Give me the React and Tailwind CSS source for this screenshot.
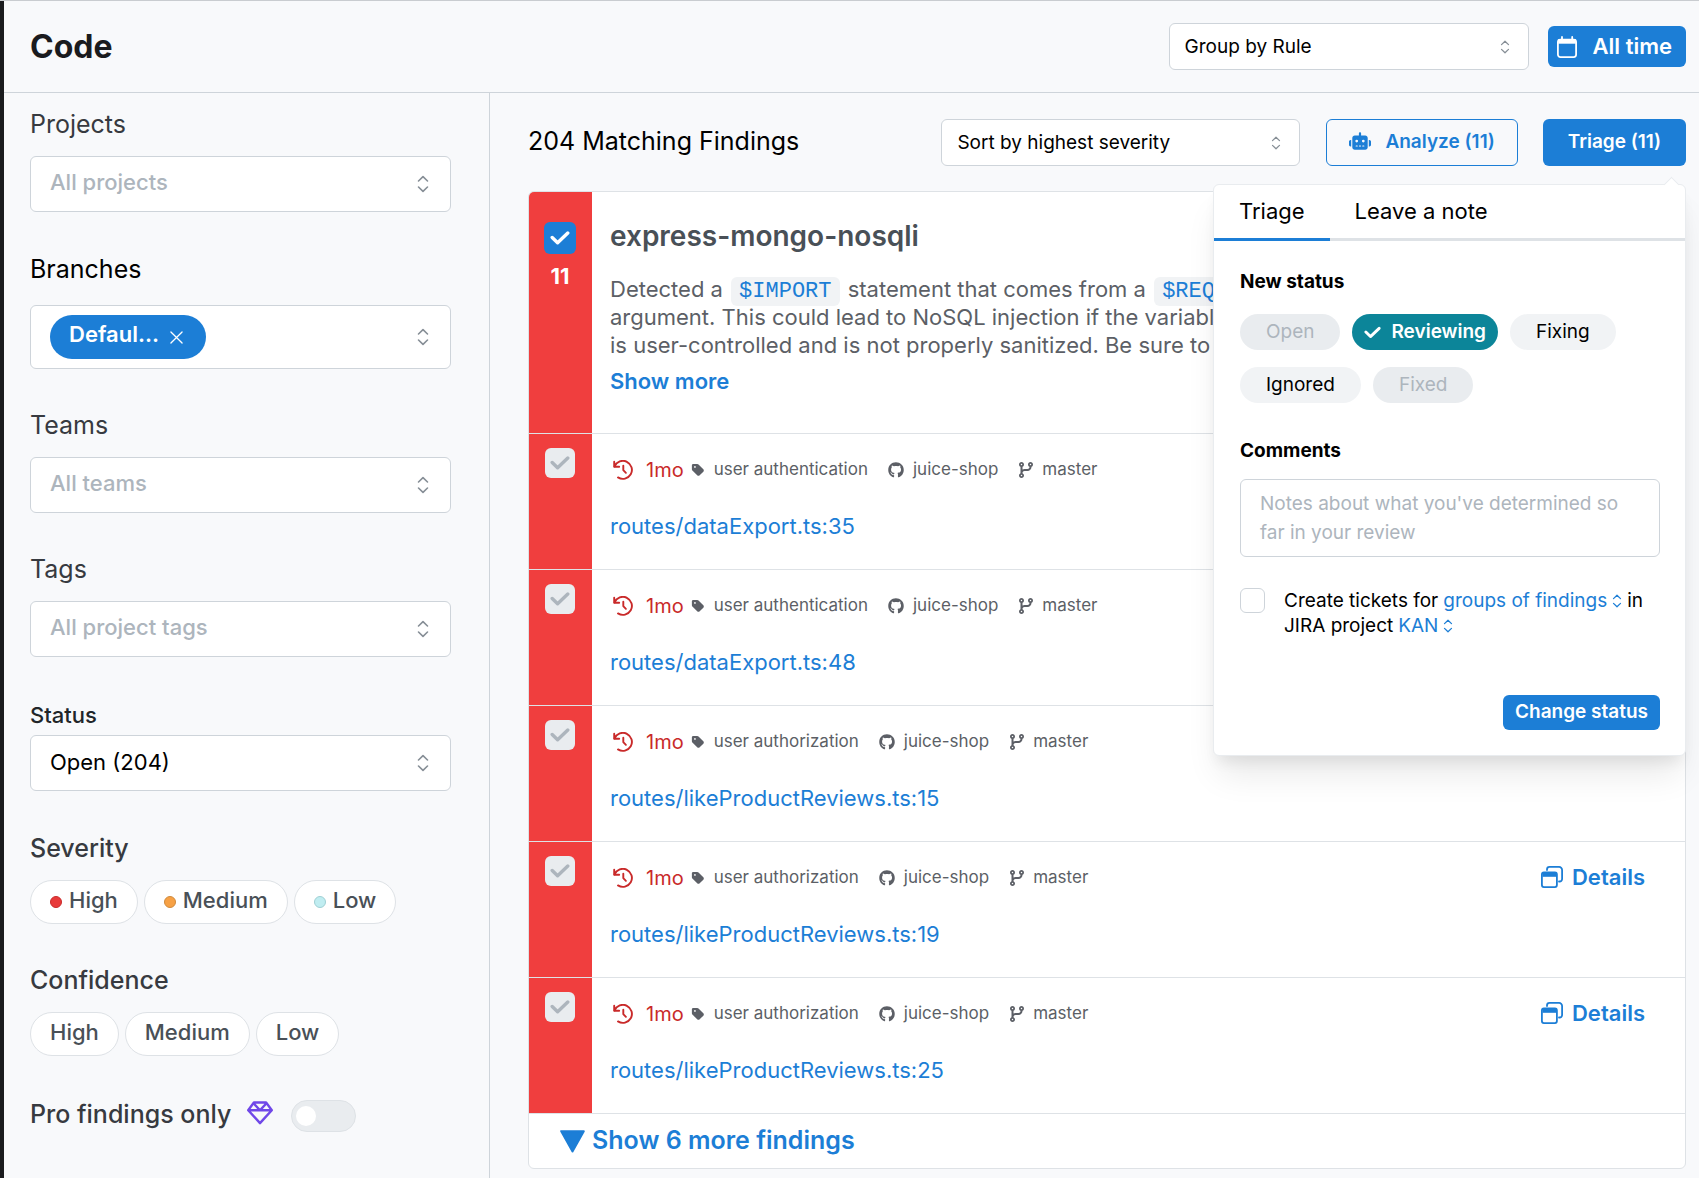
import { FaRobot, FaTag, FaCodeBranch, FaRegGem, FaGithub } from "react-icons/fa6";

const findings = [
  { path: "routes/dataExport.ts:35", tag: "user authentication" },
  { path: "routes/dataExport.ts:48", tag: "user authentication" },
  { path: "routes/likeProductReviews.ts:15", tag: "user authorization" },
  { path: "routes/likeProductReviews.ts:19", tag: "user authorization" },
  { path: "routes/likeProductReviews.ts:25", tag: "user authorization" },
];

function Chevrons({ className }) {
  return (
    <svg viewBox="0 0 12 18" fill="none" stroke="currentColor" strokeWidth="1.6" strokeLinecap="round" strokeLinejoin="round" className={className} aria-hidden="true">
      <path d="M1.5 6 6 1.6 10.5 6M1.5 12 6 16.4 10.5 12" />
    </svg>
  );
}

function CheckIcon({ className }) {
  return (
    <svg viewBox="0 0 20 14" fill="none" stroke="currentColor" strokeWidth="3.4" strokeLinecap="round" strokeLinejoin="round" className={className} aria-hidden="true">
      <path d="M2.2 6.5 7.6 11.8 17.8 2.1" />
    </svg>
  );
}

function HistoryIcon() {
  return (
    <svg viewBox="0 0 20 20" fill="none" stroke="currentColor" strokeWidth="1.9" strokeLinecap="round" strokeLinejoin="round" className="h-5 w-5" aria-hidden="true">
      <path d="M1.2 1.8v5h5" />
      <path d="M1.6 6.4A9 9 0 1 1 5 17.4" />
      <path d="M10.3 5.7V10.2l2.6 2.6" />
    </svg>
  );
}

function CalendarIcon() {
  return (
    <svg viewBox="0 0 20 22" fill="none" stroke="currentColor" strokeWidth="1.8" className="h-[22px] w-5" aria-hidden="true">
      <rect x="0.9" y="3.6" width="18.2" height="17.5" rx="2.5" />
      <path d="M1.2 5.4h17.6" strokeWidth="4.6" />
      <path d="M5 1v3M15.2 1v3" strokeLinecap="round" />
    </svg>
  );
}

function WindowsIcon() {
  return (
    <svg viewBox="0 0 22 22" fill="none" stroke="currentColor" strokeWidth="1.8" className="h-[22px] w-[22px]" aria-hidden="true">
      <rect x="0.9" y="6.4" width="15" height="14.7" rx="2" />
      <path d="M1.5 8.4h14" strokeWidth="4.8" />
      <path d="M6 4v-.6A2.5 2.5 0 0 1 8.5.9h9.6A3 3 0 0 1 21.1 3.9v9.1a2.5 2.5 0 0 1-2.5 2.5h-.6" strokeLinecap="round" />
    </svg>
  );
}

function Dropdown({ id, label, value, className }) {
  return (
    <div className={className}>
      <select
        id={id}
        aria-label={label}
        className="h-[47px] w-full appearance-none rounded-md border border-[#ced4da] bg-white pt-[2px] pl-[15px] text-[19px] text-black"
      >
        <option>{value}</option>
      </select>
      <Chevrons className="pointer-events-none absolute top-1/2 right-[19px] h-[14px] w-[10px] -translate-y-1/2 text-[#868e96]" />
    </div>
  );
}

const sideBox = "flex items-center rounded-md border border-[#ced4da] bg-white pr-[21px] pl-[19px]";
const sideLabel = "block text-[25px] leading-8 font-medium text-[#373a40]";

function FilterInput({ id, label, placeholder }) {
  return (
    <div>
      <label htmlFor={id} className="block text-[25px] leading-8 text-[#373a40]">{label}</label>
      <div className={`mt-4 h-14 ${sideBox}`}>
        <input id={id} placeholder={placeholder} className="min-w-0 flex-1 pb-1 text-[22px] font-medium outline-none placeholder:text-[#adb5bd]" />
        <Chevrons className="h-[18px] w-3 text-[#868e96]" />
      </div>
    </div>
  );
}

function Chip({ children, dot }) {
  return (
    <button className="flex h-11 items-center gap-[7px] rounded-full border border-[#dee2e6] bg-white px-[19px] pb-1 text-[22px] font-medium text-[#495057]">
      {dot && <span className={`mt-1 h-3 w-3 rounded-full border ${dot}`} />}
      {children}
    </button>
  );
}

function Sidebar() {
  return (
    <aside className="flex w-[486px] shrink-0 flex-col gap-10 border-r border-[#ced4da] pt-[15px] pr-[38px] pb-10 pl-[26px]">
      <FilterInput id="projects" label="Projects" placeholder="All projects" />
      <div className="pt-px">
        <label htmlFor="branches" className="block text-[25px] leading-8 text-black">Branches</label>
        <div className={`mt-5 h-16 ${sideBox}`}>
          <span className="flex h-11 items-center rounded-full bg-[#1c7ed6] pr-[23px] pl-[19px] text-[22px] font-semibold text-white">
            <span className="pb-[5px]">Defaul...</span>
            <button aria-label="Remove branch" className="ml-[11px]">
              <svg viewBox="0 0 14 14" fill="none" stroke="currentColor" strokeWidth="1.4" strokeLinecap="round" className="h-[13px] w-[13px]">
                <path d="M1 1l12 12M13 1 1 13" />
              </svg>
            </button>
          </span>
          <input id="branches" className="min-w-0 flex-1 outline-none" />
          <Chevrons className="h-[18px] w-3 text-[#868e96]" />
        </div>
      </div>
      <FilterInput id="teams" label="Teams" placeholder="All teams" />
      <FilterInput id="tags" label="Tags" placeholder="All project tags" />
      <div className="pb-px">
        <label htmlFor="status" className="block pt-[2px] text-[22px] leading-8 font-medium text-[#212529]">Status</label>
        <div className="relative mt-1">
          <select id="status" className="h-14 w-full appearance-none rounded-md border border-[#ced4da] bg-white pb-[2px] pl-[19px] text-[22px] text-black">
            <option>Open (204)</option>
          </select>
          <Chevrons className="pointer-events-none absolute top-[19px] right-[22px] h-[18px] w-3 text-[#868e96]" />
        </div>
      </div>
      <div>
        <h3 className={sideLabel}>Severity</h3>
        <div className="mt-4 flex gap-[6px]">
          <Chip dot="border-[#c92a2a] bg-[#e83a3a]">High</Chip>
          <Chip dot="border-[#d08a3c] bg-[#f7a145]">Medium</Chip>
          <Chip dot="border-[#9fd0d4] bg-[#c0edf1]">Low</Chip>
        </div>
      </div>
      <div>
        <h3 className={sideLabel}>Confidence</h3>
        <div className="mt-4 flex gap-[6px]">
          <Chip>High</Chip>
          <Chip>Medium</Chip>
          <Chip>Low</Chip>
        </div>
      </div>
      <div className="flex items-center pt-[2px]">
        <label htmlFor="pro" className="pb-1 text-[25px] leading-8 font-medium text-[#373a40]">Pro findings only</label>
        <FaRegGem className="mb-[6px] ml-4 h-[26px] w-[26px] text-[#7048e8]" />
        <input
          id="pro"
          type="checkbox"
          role="switch"
          className="ml-[18px] flex h-8 w-[65px] appearance-none items-center rounded-full border border-[#dee2e6] bg-[#e9ecef] px-1 before:h-5 before:w-5 before:rounded-full before:bg-white"
        />
      </div>
    </aside>
  );
}

function InlineSelect({ label, value }) {
  return (
    <span className="flex items-center gap-[5px] text-[#1c7ed6]">
      <select aria-label={label} className="appearance-none [field-sizing:content]">
        <option>{value}</option>
      </select>
      <Chevrons className="h-[14px] w-[10px]" />
    </span>
  );
}

function TriagePopover() {
  const pill = "flex h-9 items-center rounded-full px-[26px] text-[19px]";
  return (
    <div className="absolute top-[65px] right-0 z-10 w-[473px] rounded-md border border-[#e9ecef] bg-white text-left text-[19px] text-black shadow-[0_24px_32px_-6px_rgba(0,0,0,0.09),0_10px_14px_-4px_rgba(0,0,0,0.07)]">
      <div className="absolute -top-[6px] right-[8px] h-[11px] w-[11px] rotate-45 border-t border-l border-[#e9ecef] bg-white" />
      <div role="tablist" className="flex">
        <button role="tab" aria-selected="true" className="border-b-3 border-[#1c7ed6] px-[25px] pt-[11px] pb-3 text-[22px] leading-[30px]">Triage</button>
        <button role="tab" aria-selected="false" className="flex-1 border-b-3 border-[#dee2e6] px-[25px] pt-[11px] pb-3 text-left text-[22px] leading-[30px]">Leave a note</button>
      </div>
      <div className="pt-[29px] pr-[25px] pb-[25px] pl-[26px]">
        <h4 className="leading-6 font-bold">New status</h4>
        <div className="mt-5 flex flex-wrap gap-x-3 gap-y-[17px]">
          <button disabled className={`${pill} bg-[#e9ecef] text-[#adb5bd]`}>Open</button>
          <button className="flex h-9 items-center gap-[10px] rounded-full bg-[#0c8599] px-3 font-semibold text-white">
            <CheckIcon className="h-[13px] w-[17px]" />
            Reviewing
          </button>
          <button className={`${pill} bg-[#f1f3f5]`}>Fixing</button>
          <button className={`${pill} bg-[#f1f3f5]`}>Ignored</button>
          <button disabled className={`${pill} bg-[#e9ecef] text-[#adb5bd]`}>Fixed</button>
        </div>
        <label htmlFor="comments" className="mt-9 block leading-6 font-bold">Comments</label>
        <textarea
          id="comments"
          rows={2}
          placeholder="Notes about what you've determined so far in your review"
          className="mt-4 block w-full resize-none rounded-md border border-[#ced4da] px-[19px] py-[9px] leading-[29px] placeholder:text-[#adb5bd]"
        />
        <div className="mt-[31px] flex gap-[19px]">
          <input type="checkbox" aria-label="Create tickets" className="h-[25px] w-[25px] shrink-0 appearance-none rounded-md border border-[#ced4da]" />
          <div className="flex flex-wrap gap-x-[5px] leading-[25px]">
            <span>Create tickets for</span>
            <InlineSelect label="Ticket grouping" value="groups of findings" />
            <span>in</span>
            <span>JIRA project</span>
            <InlineSelect label="JIRA project" value="KAN" />
          </div>
        </div>
        <div className="mt-[57px] flex justify-end">
          <button className="h-[35px] rounded-md bg-[#1c7ed6] px-3 font-semibold text-white">Change status</button>
        </div>
      </div>
    </div>
  );
}

function FindingRow({ finding }) {
  return (
    <li className="flex h-[136px] border-t border-[#dee2e6]">
      <div className="flex w-[63px] shrink-0 justify-center bg-[#f03e3e] pt-[14px] pr-px">
        <label className="grid h-[30px] w-[30px] place-items-center rounded-md bg-[#e9ecef] text-[#adb5bd]">
          <input type="checkbox" defaultChecked disabled aria-label={finding.path} className="col-start-1 row-start-1 h-full w-full appearance-none" />
          <CheckIcon className="col-start-1 row-start-1 h-[14px] w-5" />
        </label>
      </div>
      <div className="min-w-0 flex-1 pt-[23px] pr-10 pl-[18px]">
        <div className="flex h-[26px] items-center text-[17px] text-[#5c5f66]">
          <span className="flex items-center gap-[13px] pl-[3px] text-[20px] text-[#c92a2a]">
            <HistoryIcon />
            1mo
          </span>
          <FaTag className="ml-[7px] h-[14px] w-[14px]" />
          <span className="ml-[9px]">{finding.tag}</span>
          <FaGithub className="ml-5 h-4 w-4" />
          <span className="ml-[9px]">juice-shop</span>
          <FaCodeBranch className="ml-5 h-4 w-4" />
          <span className="ml-2">master</span>
          <button className="ml-auto flex items-center gap-[9px] pb-[2px] text-[22px] font-semibold text-[#1c7ed6]">
            <WindowsIcon />
            Details
          </button>
        </div>
        <a href="#" className="mt-[29px] inline-block text-[22px] leading-7 text-[#1c7ed6]">{finding.path}</a>
      </div>
    </li>
  );
}

function Code({ children }) {
  return (
    <code className="mx-[2px] rounded-md bg-[#f1f3f5] px-2 py-[2px] font-['Liberation_Mono',monospace] text-[22px] leading-none text-[#1c7ed6]">
      {children}
    </code>
  );
}

export default function App() {
  return (
    <div className="flex min-h-screen flex-col border-t border-[#c9ccd0] bg-[#f8f9fa] font-['Inter',sans-serif]">
      <div className="flex flex-1 flex-col border-l-4 border-[#1a1b1e] bg-[#f8f9fb]">
        <header className="flex h-[92px] items-center border-b border-[#ced4da] pr-[13px] pl-[26px]">
          <h1 className="text-[32px] font-bold text-[#1a1b1e]">Code</h1>
          <Dropdown id="group" label="Group by" value="Group by Rule" className="relative ml-auto w-[360px]" />
          <button className="ml-[19px] flex h-[41px] items-center gap-4 rounded-md bg-[#1c7ed6] pr-[14px] pl-[9px] text-[22px] font-semibold text-white">
            <CalendarIcon />
            All time
          </button>
        </header>
        <div className="flex flex-1">
          <Sidebar />
          <main className="min-w-0 flex-1 pt-[26px] pr-[13px] pb-[10px] pl-[38px]">
            <div className="flex items-center">
              <h2 className="pb-[3px] text-[25px] leading-8 text-black">204 Matching Findings</h2>
              <Dropdown id="sort" label="Sort by" value="Sort by highest severity" className="relative ml-auto w-[359px]" />
              <button className="ml-[26px] flex h-[47px] items-center gap-[14px] rounded-md border border-[#1c7ed6] px-[22px] text-[19px] font-semibold text-[#1c7ed6]">
                <FaRobot className="mb-1 h-[22px] w-[22px]" />
                Analyze (11)
              </button>
              <div className="relative ml-[25px]">
                <button className="h-[47px] rounded-md bg-[#1c7ed6] px-[25px] text-[19px] font-semibold text-white">Triage (11)</button>
                <TriagePopover />
              </div>
            </div>
            <section className="mt-[25px] overflow-hidden rounded-md border border-[#dee2e6] bg-white">
              <div className="flex h-[241px]">
                <div className="flex w-[63px] shrink-0 flex-col items-center bg-[#f03e3e] pt-[30px] pr-px">
                  <label className="grid h-8 w-8 place-items-center rounded-md bg-[#1c7ed6] text-white">
                    <input type="checkbox" defaultChecked aria-label="Select all findings" className="col-start-1 row-start-1 h-full w-full appearance-none" />
                    <CheckIcon className="col-start-1 row-start-1 h-[14px] w-5" />
                  </label>
                  <span className="mt-2 text-[22px] leading-7 font-bold text-white">11</span>
                </div>
                <div className="min-w-0 flex-1 pt-[26px] pl-[18px]">
                  <h3 className="text-[28px] leading-9 font-semibold text-[#495057]">express-mongo-nosqli</h3>
                  <p className="mt-[21px] text-[22px] leading-7 whitespace-nowrap text-[#5c5f66]">
                    Detected a <Code>$IMPORT</Code> statement that comes from a <Code>$REQ</Code>
                    <br />
                    argument. This could lead to NoSQL injection if the variable
                    <br />
                    is user-controlled and is not properly sanitized. Be sure to
                  </p>
                  <button className="mt-[6px] text-[22px] leading-8 font-semibold text-[#1c7ed6]">Show more</button>
                </div>
              </div>
              <ul>
                {findings.map((f) => (
                  <FindingRow key={f.path} finding={f} />
                ))}
              </ul>
              <button className="flex h-[55px] w-full items-center gap-[7px] border-t border-[#dee2e6] pl-[31px] text-[25px] font-semibold text-[#1c7ed6]">
                <svg viewBox="0 0 25 23" fill="currentColor" stroke="currentColor" strokeWidth="2" strokeLinejoin="round" className="h-[23px] w-[25px]" aria-hidden="true">
                  <path d="M1.2 1.2h22.6L12.5 21.5z" />
                </svg>
                Show 6 more findings
              </button>
            </section>
          </main>
        </div>
      </div>
    </div>
  );
}
